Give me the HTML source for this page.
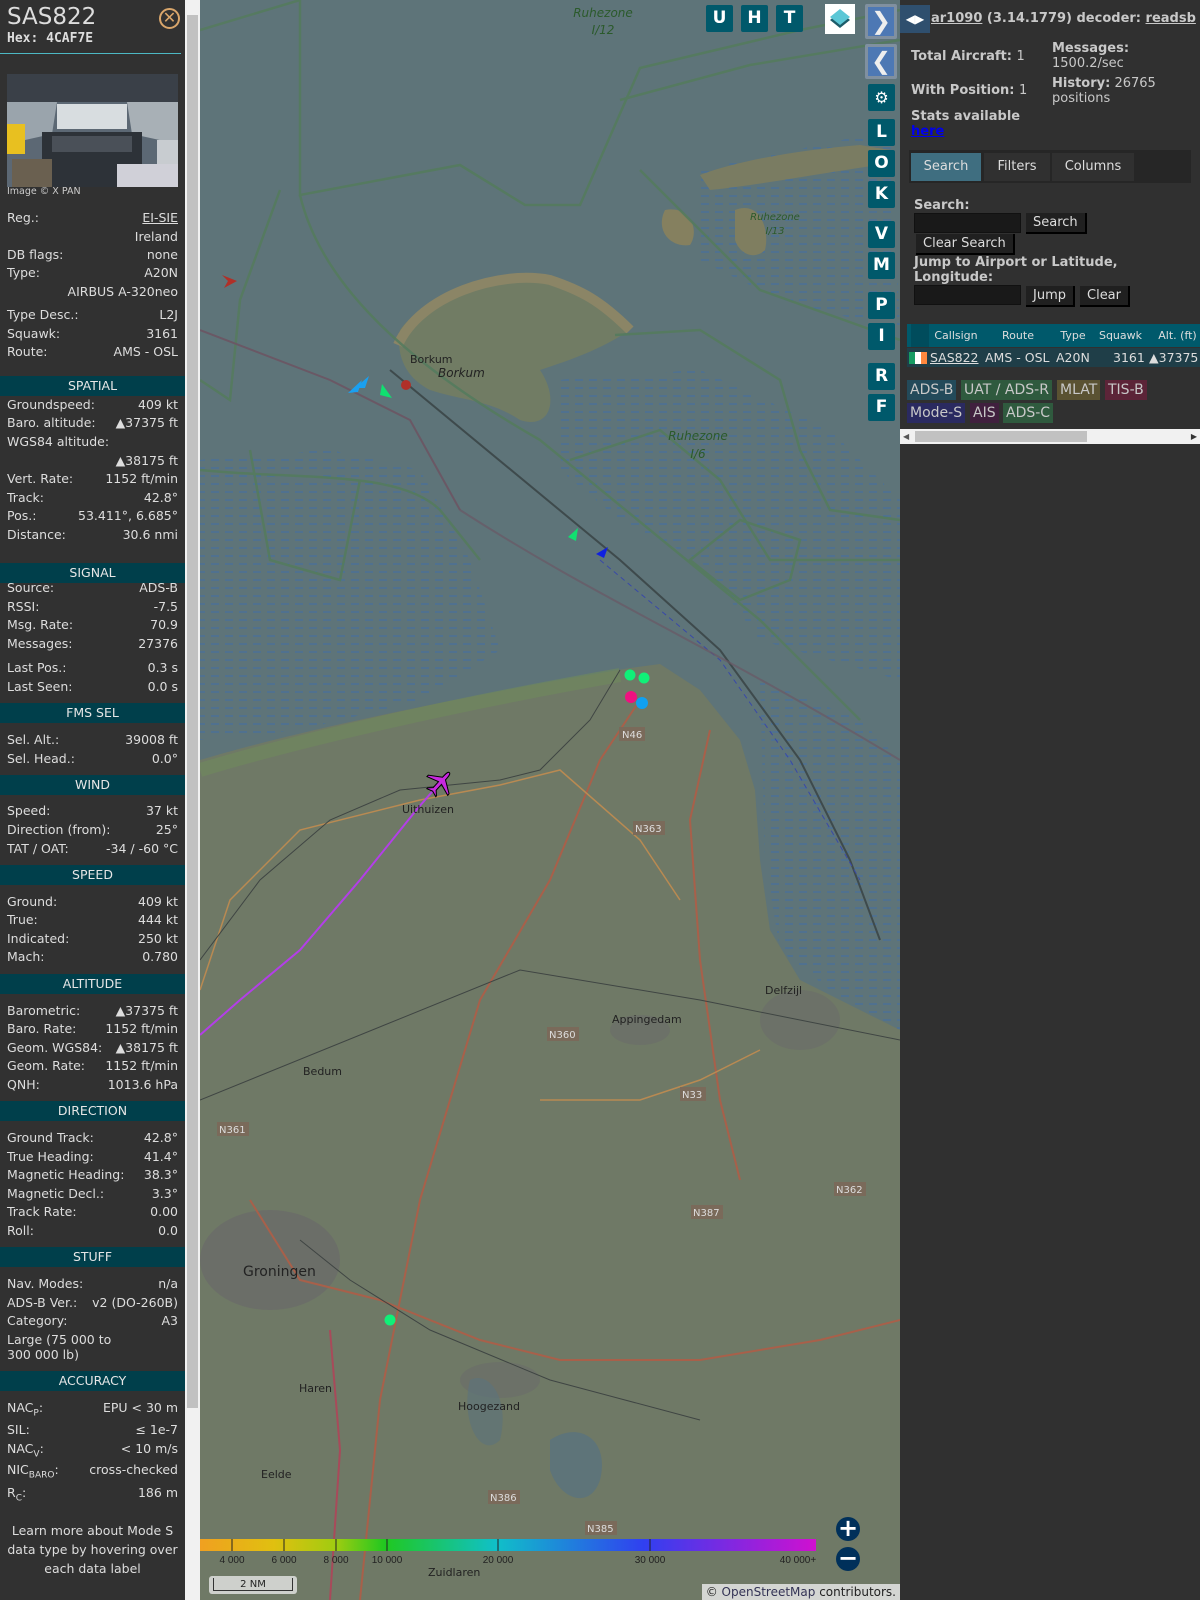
<!DOCTYPE html>
<html><head><meta charset="utf-8">
<style>
*{margin:0;padding:0;box-sizing:border-box}
body{width:1200px;height:1600px;overflow:hidden;background:#303030;font-family:"DejaVu Sans","Liberation Sans",sans-serif;position:relative}
#left{position:absolute;left:0;top:0;width:185px;height:1600px;background:#313131;color:#ddd;font-size:12.5px;overflow:hidden}
#sb{position:absolute;left:185px;top:0;width:15px;height:1600px;background:#f1f1f1}
#sb .th{position:absolute;left:2px;top:15px;width:11px;height:1393px;background:#c1c1c1}
.r{position:absolute;left:7px;width:171px;height:18px;line-height:18px;white-space:nowrap}
.r .v{position:absolute;right:0;top:0}
.h{position:absolute;left:0;width:185px;height:20px;line-height:20px;background:#003f4b;color:#e6e6e6;text-align:center;font-size:12.5px}
#map{position:absolute;left:200px;top:0;width:700px;height:1600px;background:#5e7479;overflow:hidden}
.btn{position:absolute;width:27px;height:27px;background:#00596b;color:#fff;font-weight:bold;font-size:17px;text-align:center;line-height:27px;border-radius:2px;font-family:"DejaVu Sans",sans-serif}
#right{position:absolute;left:900px;top:0;width:300px;height:1600px;background:#303030;color:#c8c8c8;font-size:13px}
.b{font-weight:bold}
.ib{position:absolute;height:20px;background:#191919;border:1px solid #111}
.pb{position:absolute;height:21px;line-height:19px;background:#202020;color:#ddd;border-right:2px solid #000;border-bottom:2px solid #000;padding:0 7px;font-size:13px}
.tag{position:absolute;height:20px;line-height:20px;padding:0 3px;font-size:14px}
</style></head><body>
<div id="left">
<div style="position:absolute;left:7px;top:4px;font-size:23px;color:#ddd">SAS822</div>
<div style="position:absolute;left:7px;top:31px;font-size:13px;font-weight:bold;font-family:'DejaVu Sans Mono',monospace;color:#ddd">Hex: 4CAF7E</div>
<div style="position:absolute;left:159px;top:8px;width:21px;height:21px;border:2px solid #d9a66b;border-radius:50%;color:#d9a66b;font-size:16px;line-height:16px;text-align:center">✕</div>
<div style="position:absolute;left:0;top:53px;width:181px;height:1px;background:#4cb8c4"></div>
<svg style="position:absolute;left:7px;top:74px" width="171" height="113" viewBox="0 0 171 113">
<rect width="171" height="113" fill="#5c6874"/>
<rect x="0" y="0" width="171" height="28" fill="#3a4048"/>
<polygon points="0,28 50,28 45,60 0,70" fill="#9aa4ac"/>
<polygon points="171,28 120,28 125,60 171,70" fill="#a8b0b6"/>
<rect x="50" y="30" width="70" height="25" fill="#d8dde0"/>
<rect x="0" y="50" width="18" height="30" fill="#e8c020"/>
<rect x="35" y="58" width="100" height="55" fill="#2d3238"/>
<rect x="45" y="62" width="80" height="16" fill="#4a5058"/>
<rect x="150" y="66" width="21" height="25" fill="#c8ccd0"/>
<rect x="5" y="85" width="40" height="28" fill="#6a6050"/>
<rect x="110" y="90" width="61" height="23" fill="#d0d0d8"/>
</svg>
<div style="position:absolute;left:7px;top:186px;font-size:9.5px;color:#ccc">Image © X PAN</div>
<div class="r" style="top:209px">Reg.:<span class="v" style="text-decoration:underline">EI-SIE</span></div>
<div class="r" style="top:228px"><span class="v">Ireland</span></div>
<div class="r" style="top:246px">DB flags:<span class="v">none</span></div>
<div class="r" style="top:264px">Type:<span class="v">A20N</span></div>
<div class="r" style="top:283px"><span class="v">AIRBUS A-320neo</span></div>
<div class="r" style="top:306px">Type Desc.:<span class="v">L2J</span></div>
<div class="r" style="top:325px">Squawk:<span class="v">3161</span></div>
<div class="r" style="top:343px">Route:<span class="v">AMS - OSL</span></div>
<div class="h" style="top:376px">SPATIAL</div>
<div class="r" style="top:396px">Groundspeed:<span class="v">409 kt</span></div>
<div class="r" style="top:414px">Baro. altitude:<span class="v">▲37375 ft</span></div>
<div class="r" style="top:433px">WGS84 altitude:</div>
<div class="r" style="top:452px"><span class="v">▲38175 ft</span></div>
<div class="r" style="top:470px">Vert. Rate:<span class="v">1152 ft/min</span></div>
<div class="r" style="top:489px">Track:<span class="v">42.8°</span></div>
<div class="r" style="top:507px">Pos.:<span class="v">53.411°, 6.685°</span></div>
<div class="r" style="top:526px">Distance:<span class="v">30.6 nmi</span></div>
<div class="h" style="top:563px">SIGNAL</div>
<div class="r" style="top:579px">Source:<span class="v">ADS-B</span></div>
<div class="r" style="top:598px">RSSI:<span class="v">-7.5</span></div>
<div class="r" style="top:616px">Msg. Rate:<span class="v">70.9</span></div>
<div class="r" style="top:635px">Messages:<span class="v">27376</span></div>
<div class="r" style="top:659px">Last Pos.:<span class="v">0.3 s</span></div>
<div class="r" style="top:678px">Last Seen:<span class="v">0.0 s</span></div>
<div class="h" style="top:703px">FMS SEL</div>
<div class="r" style="top:731px">Sel. Alt.:<span class="v">39008 ft</span></div>
<div class="r" style="top:750px">Sel. Head.:<span class="v">0.0°</span></div>
<div class="h" style="top:775px">WIND</div>
<div class="r" style="top:802px">Speed:<span class="v">37 kt</span></div>
<div class="r" style="top:821px">Direction (from):<span class="v">25°</span></div>
<div class="r" style="top:840px">TAT / OAT:<span class="v">-34 / -60 °C</span></div>
<div class="h" style="top:865px">SPEED</div>
<div class="r" style="top:893px">Ground:<span class="v">409 kt</span></div>
<div class="r" style="top:911px">True:<span class="v">444 kt</span></div>
<div class="r" style="top:930px">Indicated:<span class="v">250 kt</span></div>
<div class="r" style="top:948px">Mach:<span class="v">0.780</span></div>
<div class="h" style="top:974px">ALTITUDE</div>
<div class="r" style="top:1002px">Barometric:<span class="v">▲37375 ft</span></div>
<div class="r" style="top:1020px">Baro. Rate:<span class="v">1152 ft/min</span></div>
<div class="r" style="top:1039px">Geom. WGS84:<span class="v">▲38175 ft</span></div>
<div class="r" style="top:1057px">Geom. Rate:<span class="v">1152 ft/min</span></div>
<div class="r" style="top:1076px">QNH:<span class="v">1013.6 hPa</span></div>
<div class="h" style="top:1101px">DIRECTION</div>
<div class="r" style="top:1129px">Ground Track:<span class="v">42.8°</span></div>
<div class="r" style="top:1148px">True Heading:<span class="v">41.4°</span></div>
<div class="r" style="top:1166px">Magnetic Heading:<span class="v">38.3°</span></div>
<div class="r" style="top:1185px">Magnetic Decl.:<span class="v">3.3°</span></div>
<div class="r" style="top:1203px">Track Rate:<span class="v">0.00</span></div>
<div class="r" style="top:1222px">Roll:<span class="v">0.0</span></div>
<div class="h" style="top:1247px">STUFF</div>
<div class="r" style="top:1275px">Nav. Modes:<span class="v">n/a</span></div>
<div class="r" style="top:1294px">ADS-B Ver.:<span class="v">v2 (DO-260B)</span></div>
<div class="r" style="top:1312px">Category:<span class="v">A3</span></div>
<div class="r" style="top:1331px">Large (75 000 to</div>
<div class="r" style="top:1346px">300 000 lb)</div>
<div class="h" style="top:1371px">ACCURACY</div>
<div class="r" style="top:1399px">NAC<sub style="font-size:9px">P</sub>:<span class="v">EPU &lt; 30 m</span></div>
<div class="r" style="top:1421px">SIL:<span class="v">≤ 1e-7</span></div>
<div class="r" style="top:1440px">NAC<sub style="font-size:9px">V</sub>:<span class="v">&lt; 10 m/s</span></div>
<div class="r" style="top:1461px">NIC<sub style="font-size:9px">BARO</sub>:<span class="v">cross-checked</span></div>
<div class="r" style="top:1484px">R<sub style="font-size:9px">C</sub>:<span class="v">186 m</span></div>
<div style="position:absolute;left:0;top:1521px;width:185px;text-align:center;line-height:19px">Learn more about Mode S data type by hovering over each data label</div>
</div>
<div id="sb"><div class="th"></div></div>

<div id="map">
<svg width="700" height="1600" viewBox="200 0 700 1600" style="position:absolute;left:0;top:0">
<defs>
<pattern id="w" width="14" height="8" patternUnits="userSpaceOnUse"><line x1="1" y1="4" x2="9" y2="4" stroke="#3a6db0" stroke-width="1"/></pattern>
<linearGradient id="g" x1="0" x2="1">
<stop offset="0" stop-color="#f0a020"/><stop offset="0.12" stop-color="#e0c010"/><stop offset="0.22" stop-color="#a0cc10"/><stop offset="0.3" stop-color="#20c820"/><stop offset="0.48" stop-color="#10c0c8"/><stop offset="0.72" stop-color="#3040f0"/><stop offset="1" stop-color="#d010d0"/></linearGradient>
</defs>
<!-- wadden flats -->
<g fill="url(#w)" opacity="0.8">
<path d="M560,380 L700,370 L830,430 L900,500 L900,680 L760,640 L700,560 L620,520 L560,470Z"/>
<path d="M200,460 L330,450 L420,470 L470,560 L500,650 L420,700 L300,730 L200,740Z"/>
<path d="M760,680 L860,720 L900,760 L900,1030 L830,990 L780,950 L765,860Z"/>
<path d="M700,170 L890,130 L900,330 L780,300 L700,260Z"/>
</g>
<!-- mainland -->
<path d="M200,760 C300,730 450,700 560,680 L630,668 L660,664 L700,690 L740,740 L755,790 L760,860 L770,930 L800,980 L860,1010 L900,1030 L900,1600 L200,1600 Z" fill="#6f7966"/>
<path d="M200,770 C300,740 450,705 620,675" stroke="#6f8a5c" stroke-width="14" fill="none" opacity="0.6"/>
<!-- cities -->
<ellipse cx="270" cy="1260" rx="70" ry="50" fill="#6a6c69" opacity="0.8"/>
<ellipse cx="800" cy="1020" rx="40" ry="30" fill="#6a6c69" opacity="0.6"/>
<ellipse cx="640" cy="1030" rx="30" ry="15" fill="#6a6c69" opacity="0.6"/>
<ellipse cx="500" cy="1380" rx="40" ry="18" fill="#6a6c69" opacity="0.6"/>
<!-- lakes -->
<path d="M550,1440 C580,1420 610,1440 600,1480 C590,1510 560,1500 550,1470Z" fill="#5e7479"/>
<path d="M470,1380 C490,1370 510,1400 500,1440 C480,1460 460,1420 470,1380Z" fill="#5e7479" opacity="0.7"/>
<!-- borkum -->
<path d="M400,330 C430,290 500,270 550,280 C580,290 600,300 630,330 C600,350 570,360 540,370 C560,400 550,430 520,420 C490,400 460,400 430,390 C410,380 395,360 400,330Z" fill="#717c64"/>
<path d="M398,345 C420,295 500,270 550,280 C580,290 600,300 630,330" stroke="#8b8566" stroke-width="10" fill="none"/>
<!-- juist / small islands -->
<path d="M700,175 C740,160 800,150 860,145 L890,150 L880,165 C840,170 760,185 710,190Z" fill="#7a7c62"/>
<path d="M735,210 C760,200 770,230 765,250 C755,260 740,255 735,240Z" fill="#7f7e60"/>
<path d="M665,210 C690,205 700,230 690,245 C670,248 655,230 665,210Z" fill="#85805f"/>
<!-- boundary lines -->
<g stroke="#557b5e" stroke-width="2.5" fill="none" opacity="0.9">
<path d="M200,30 L300,0"/><path d="M300,0 L300,195 L460,165 L525,205 L580,205 L640,68 L800,30 L900,10"/>
<path d="M300,195 C320,280 400,360 540,440 L760,620 L860,720"/>
<path d="M280,190 L240,300 L230,400 L200,380"/>
<path d="M200,470 C300,480 400,470 440,510 L480,560"/>
<path d="M620,100 L750,65 L900,40"/>
<path d="M640,170 L700,230 L760,290 L900,340"/>
<path d="M615,335 L700,330 L780,380 L800,450 L830,510 L900,520"/>
<path d="M570,460 L660,430 L720,480 L770,560 L900,560"/>
<path d="M250,450 L270,560 L340,580 L360,480"/>
<path d="M690,560 L740,520 L800,540 L790,580 L740,600Z"/>
</g>
<!-- channel line -->
<path d="M390,370 L620,560 L720,650 L800,760 L850,860 L880,940" stroke="#3e4a4c" stroke-width="2" fill="none"/>
<path d="M200,330 L330,380 L410,420 L460,510" stroke="#6a5865" stroke-width="2" fill="none"/>
<path d="M600,560 L720,660 L790,760 L860,880" stroke="#3949a8" stroke-width="1" stroke-dasharray="5,4" fill="none"/>
<path d="M460,510 C600,600 700,640 900,760" stroke="#6a5865" stroke-width="2" fill="none" opacity="0.7"/>
<!-- roads -->
<g fill="none" stroke="#a8604a" stroke-width="2">
<path d="M640,700 L600,760 L550,880 L480,1000 L420,1200 L380,1400 L360,1600"/>
<path d="M710,730 L690,820 L700,960 L720,1100 L740,1180"/>
<path d="M250,1200 L300,1280 L380,1300 L480,1340 L560,1360 L700,1360 L820,1340 L900,1320"/>
<path d="M330,1330 L340,1450 L330,1600" stroke="#a84a5a"/>
</g>
<g fill="none" stroke="#b98a52" stroke-width="1.5">
<path d="M200,990 L230,900 L300,830 L420,800 L500,785 L560,770 L640,840 L680,900"/>
<path d="M540,1100 L640,1100 L700,1080 L760,1050"/>
</g>
<g fill="none" stroke="#3f4543" stroke-width="1">
<path d="M200,960 L260,880 L330,820 L400,790 L500,780 L540,770 L590,720 L620,670"/>
<path d="M200,1100 L520,970 L700,1000 L900,1040"/>
<path d="M300,1240 L350,1280 L430,1330 L550,1380 L700,1420"/>
</g>
<!-- purple track -->
<path d="M200,1035 L240,1000 L300,950 L360,880 L418,808 L438,785" stroke="#b33ee8" stroke-width="2" fill="none"/>
<!-- aircraft -->
<g transform="translate(440,783) rotate(42)" fill="#c82ae0" stroke="#000" stroke-width="1">
<path d="M0,-14 C2,-14 2,-10 2,-6 L14,2 L14,4 L2,0 L2,8 L6,12 L6,13 L0,11 L-6,13 L-6,12 L-2,8 L-2,0 L-14,4 L-14,2 L-2,-6 C-2,-10 -2,-14 0,-14Z"/>
</g>
<!-- other markers -->
<polygon points="222,275 237,281 224,288 228,281" fill="#b03028"/>
<circle cx="406" cy="385" r="5" fill="#b03028"/>
<polygon points="348,393 362,380 358,392" fill="#1aa0f0"/><polygon points="355,388 369,376 365,388" fill="#1aa0f0"/>
<polygon points="382,384 392,398 380,395" fill="#10e070"/>
<polygon points="568,537 578,528 576,541" fill="#10e070"/>
<polygon points="596,554 608,547 604,558" fill="#1020e0"/>
<circle cx="630" cy="675" r="5.5" fill="#10f078"/><circle cx="644" cy="678" r="5.5" fill="#10f078"/>
<circle cx="631" cy="697" r="6" fill="#f01080"/><circle cx="642" cy="703" r="6" fill="#10a0f0"/>
<circle cx="390" cy="1320" r="5.5" fill="#10f078"/>
<!-- legend -->
<rect x="200" y="1539" width="616" height="12" fill="url(#g)"/>
<g stroke="#222" stroke-width="1"><line x1="232" y1="1539" x2="232" y2="1551"/><line x1="284" y1="1539" x2="284" y2="1551"/><line x1="336" y1="1539" x2="336" y2="1551"/><line x1="387" y1="1539" x2="387" y2="1551"/><line x1="498" y1="1539" x2="498" y2="1551"/><line x1="650" y1="1539" x2="650" y2="1551"/></g>
<g font-family="Liberation Sans,sans-serif" font-size="10" fill="#222" text-anchor="middle">
<text x="232" y="1563">4 000</text><text x="284" y="1563">6 000</text><text x="336" y="1563">8 000</text><text x="387" y="1563">10 000</text><text x="498" y="1563">20 000</text><text x="650" y="1563">30 000</text><text x="798" y="1563">40 000+</text></g>
<!-- labels -->
<g font-family="DejaVu Sans,sans-serif" font-size="11" fill="#222">
<text x="410" y="363">Borkum</text><text x="438" y="377" font-style="italic" font-size="12">Borkum</text><text x="243" y="1276" font-size="14">Groningen</text>
<text x="402" y="813">Uithuizen</text><text x="612" y="1023">Appingedam</text><text x="765" y="994">Delfzijl</text>
<text x="303" y="1075">Bedum</text><text x="299" y="1392">Haren</text><text x="458" y="1410">Hoogezand</text><text x="261" y="1478">Eelde</text><text x="428" y="1576">Zuidlaren</text>
</g>
<g font-family="DejaVu Sans,sans-serif" font-size="12" fill="#2b5a2b" font-style="italic" text-anchor="middle">
<text x="603" y="17">Ruhezone</text><text x="603" y="34">I/12</text><text x="698" y="440">Ruhezone</text><text x="698" y="458">I/6</text>
<text x="775" y="220" font-size="10">Ruhezone</text><text x="775" y="234" font-size="10">I/13</text>
</g>
<g font-family="DejaVu Sans,sans-serif" font-size="10" fill="#eee">
<rect x="619" y="727" width="26" height="14" fill="#7a6a5a"/><text x="622" y="738" fill="#ddd">N46</text>
<rect x="633" y="821" width="32" height="14" fill="#7a6a5a"/><text x="635" y="832" fill="#ddd">N363</text>
<rect x="547" y="1027" width="32" height="14" fill="#7a6a5a"/><text x="549" y="1038" fill="#ddd">N360</text>
<rect x="680" y="1087" width="26" height="14" fill="#7a6a5a"/><text x="682" y="1098" fill="#ddd">N33</text>
<rect x="217" y="1122" width="32" height="14" fill="#7a6a5a"/><text x="219" y="1133" fill="#ddd">N361</text>
<rect x="834" y="1182" width="32" height="14" fill="#7a6a5a"/><text x="836" y="1193" fill="#ddd">N362</text>
<rect x="691" y="1205" width="32" height="14" fill="#7a6a5a"/><text x="693" y="1216" fill="#ddd">N387</text>
<rect x="488" y="1490" width="32" height="14" fill="#7a6a5a"/><text x="490" y="1501" fill="#ddd">N386</text>
<rect x="585" y="1521" width="32" height="14" fill="#7a6a5a"/><text x="587" y="1532" fill="#ddd">N385</text>
</g>
</svg>
<div class="btn" style="left:506px;top:5px">U</div><div class="btn" style="left:541px;top:5px">H</div><div class="btn" style="left:576px;top:5px">T</div>
<div style="position:absolute;left:625px;top:4px;width:30px;height:30px;background:#fff"><svg width="30" height="30"><path d="M15,8 L25,16 L15,24 L5,16Z" fill="#1d5c6a"/><path d="M15,5 L25,13 L15,21 L5,13Z" fill="#5cc7d6"/></svg></div>
<div style="position:absolute;left:665px;top:4px;width:32px;height:35px;background:#8090a0;border-radius:2px"><div style="position:absolute;left:3px;top:3px;width:26px;height:29px;background:#4d78b4;color:#eee;font-size:24px;line-height:28px;text-align:center;font-weight:bold">❯</div></div>
<div style="position:absolute;left:665px;top:44px;width:32px;height:35px;background:#8090a0;border-radius:2px"><div style="position:absolute;left:3px;top:3px;width:26px;height:29px;background:#4d78b4;color:#eee;font-size:24px;line-height:28px;text-align:center;font-weight:bold">❮</div></div>
<div class="btn" style="left:668px;top:84px;font-size:16px">⚙</div>
<div class="btn" style="left:668px;top:119px">L</div><div class="btn" style="left:668px;top:150px">O</div><div class="btn" style="left:668px;top:181px">K</div>
<div class="btn" style="left:668px;top:221px">V</div><div class="btn" style="left:668px;top:252px">M</div>
<div class="btn" style="left:668px;top:292px">P</div><div class="btn" style="left:668px;top:323px">I</div>
<div class="btn" style="left:668px;top:363px">R</div><div class="btn" style="left:668px;top:394px">F</div>
<div style="position:absolute;left:636px;top:1517px;width:24px;height:24px;border-radius:50%;background:#00305a;color:#fff;font-size:24px;line-height:23px;text-align:center;font-weight:bold">+</div>
<div style="position:absolute;left:636px;top:1547px;width:24px;height:24px;border-radius:50%;background:#00305a;color:#fff;font-size:24px;line-height:22px;text-align:center;font-weight:bold">−</div>
<div style="position:absolute;left:9px;top:1576px;width:88px;height:18px;background:rgba(230,230,230,0.8);border-radius:3px"><div style="position:absolute;left:4px;top:2px;width:80px;height:13px;border:1px solid #333;border-top:none;font-size:10px;text-align:center;line-height:13px;color:#222">2 NM</div></div>
<div style="position:absolute;right:0;top:1584px;height:16px;background:rgba(230,230,230,0.85);font-size:12px;line-height:16px;padding:0 4px;color:#222">© <span style="color:#335">OpenStreetMap</span> contributors.</div>
</div>

<div id="right">
<div style="position:absolute;left:0;top:5px;width:30px;height:28px;background:#2f4f6e;color:#fff;font-size:12px;line-height:28px;text-align:center">◀▶</div>
<div class="b" style="position:absolute;left:31px;top:11px;font-size:13px"><u>ar1090</u> (3.14.1779) decoder: <u>readsb</u></div>
<div class="b" style="position:absolute;left:11px;top:49px">Total Aircraft: <span style="font-weight:normal">1</span></div>
<div class="b" style="position:absolute;left:11px;top:83px">With Position: <span style="font-weight:normal">1</span></div>
<div style="position:absolute;left:152px;top:41px;line-height:15px"><b>Messages:</b><br>1500.2/sec</div>
<div style="position:absolute;left:152px;top:76px;line-height:15px"><b>History:</b> 26765<br>positions</div>
<div class="b" style="position:absolute;left:11px;top:109px;line-height:15px">Stats available<br><u style="color:#00e">here</u></div>
<div style="position:absolute;left:9px;top:150px;width:282px;height:33px;background:#262626"></div>
<div style="position:absolute;left:11px;top:153px;width:70px;height:28px;background:#3f6e80;color:#ddd;line-height:28px;text-align:center">Search</div>
<div style="position:absolute;left:84px;top:153px;width:66px;height:28px;background:#303030;color:#ddd;line-height:28px;text-align:center">Filters</div>
<div style="position:absolute;left:152px;top:153px;width:82px;height:28px;background:#303030;color:#ddd;line-height:28px;text-align:center">Columns</div>
<div class="b" style="position:absolute;left:14px;top:198px">Search:</div>
<div class="ib" style="left:14px;top:213px;width:107px"></div>
<div class="pb" style="left:126px;top:213px">Search</div>
<div class="pb" style="left:16px;top:234px">Clear Search</div>
<div class="b" style="position:absolute;left:14px;top:255px;line-height:15px">Jump to Airport or Latitude,<br>Longitude:</div>
<div class="ib" style="left:14px;top:285px;width:107px"></div>
<div class="pb" style="left:126px;top:286px">Jump</div>
<div class="pb" style="left:180px;top:286px">Clear</div>
<div style="position:absolute;left:7px;top:324px;width:293px;height:23px;background:#00596b"></div>
<div style="position:absolute;left:7px;top:324px;font-size:11px;color:#ddd;line-height:23px;white-space:nowrap">
<span style="position:absolute;left:4px;width:18px;height:23px;background:#004c5c"></span>
<span style="position:absolute;left:24px;width:50px;text-align:center">Callsign</span>
<span style="position:absolute;left:78px;width:66px;text-align:center">Route</span>
<span style="position:absolute;left:148px;width:36px;text-align:center">Type</span>
<span style="position:absolute;left:188px;width:51px;text-align:center">Squawk</span>
<span style="position:absolute;left:243px;width:55px;text-align:center">Alt. (ft)</span></div>
<div style="position:absolute;left:7px;top:348px;width:293px;height:19px;background:#1f3e48;font-size:12.5px;line-height:19px;color:#ddd;white-space:nowrap;overflow:hidden">
<span style="position:absolute;left:2px;top:4px;width:6px;height:12px;background:#169b62"></span><span style="position:absolute;left:8px;top:4px;width:6px;height:12px;background:#fff"></span><span style="position:absolute;left:14px;top:4px;width:6px;height:12px;background:#ff883e"></span>
<span style="position:absolute;left:23px;text-decoration:underline">SAS822</span>
<span style="position:absolute;left:78px">AMS - OSL</span><span style="position:absolute;left:149px">A20N</span>
<span style="position:absolute;left:206px">3161</span><span style="position:absolute;left:242px">▲37375</span></div>
<div class="tag" style="left:7px;top:380px;background:#234a5a">ADS-B</div>
<div class="tag" style="left:61px;top:380px;background:#2f5a3e">UAT / ADS-R</div>
<div class="tag" style="left:157px;top:380px;background:#5a5232">MLAT</div>
<div class="tag" style="left:205px;top:380px;background:#5c2438">TIS-B</div>
<div class="tag" style="left:7px;top:403px;background:#2a2a60">Mode-S</div>
<div class="tag" style="left:70px;top:403px;background:#40203e">AIS</div>
<div class="tag" style="left:103px;top:403px;background:#2f5a3e">ADS-C</div>
<div style="position:absolute;left:0;top:429px;width:300px;height:15px;background:#f1f1f1"><div style="position:absolute;left:15px;top:2px;width:172px;height:11px;background:#c1c1c1"></div><span style="position:absolute;left:3px;top:0;font-size:8px;color:#555;line-height:15px">◀</span><span style="position:absolute;right:3px;top:0;font-size:8px;color:#333;line-height:15px">▶</span></div>
</div>
</body></html>
